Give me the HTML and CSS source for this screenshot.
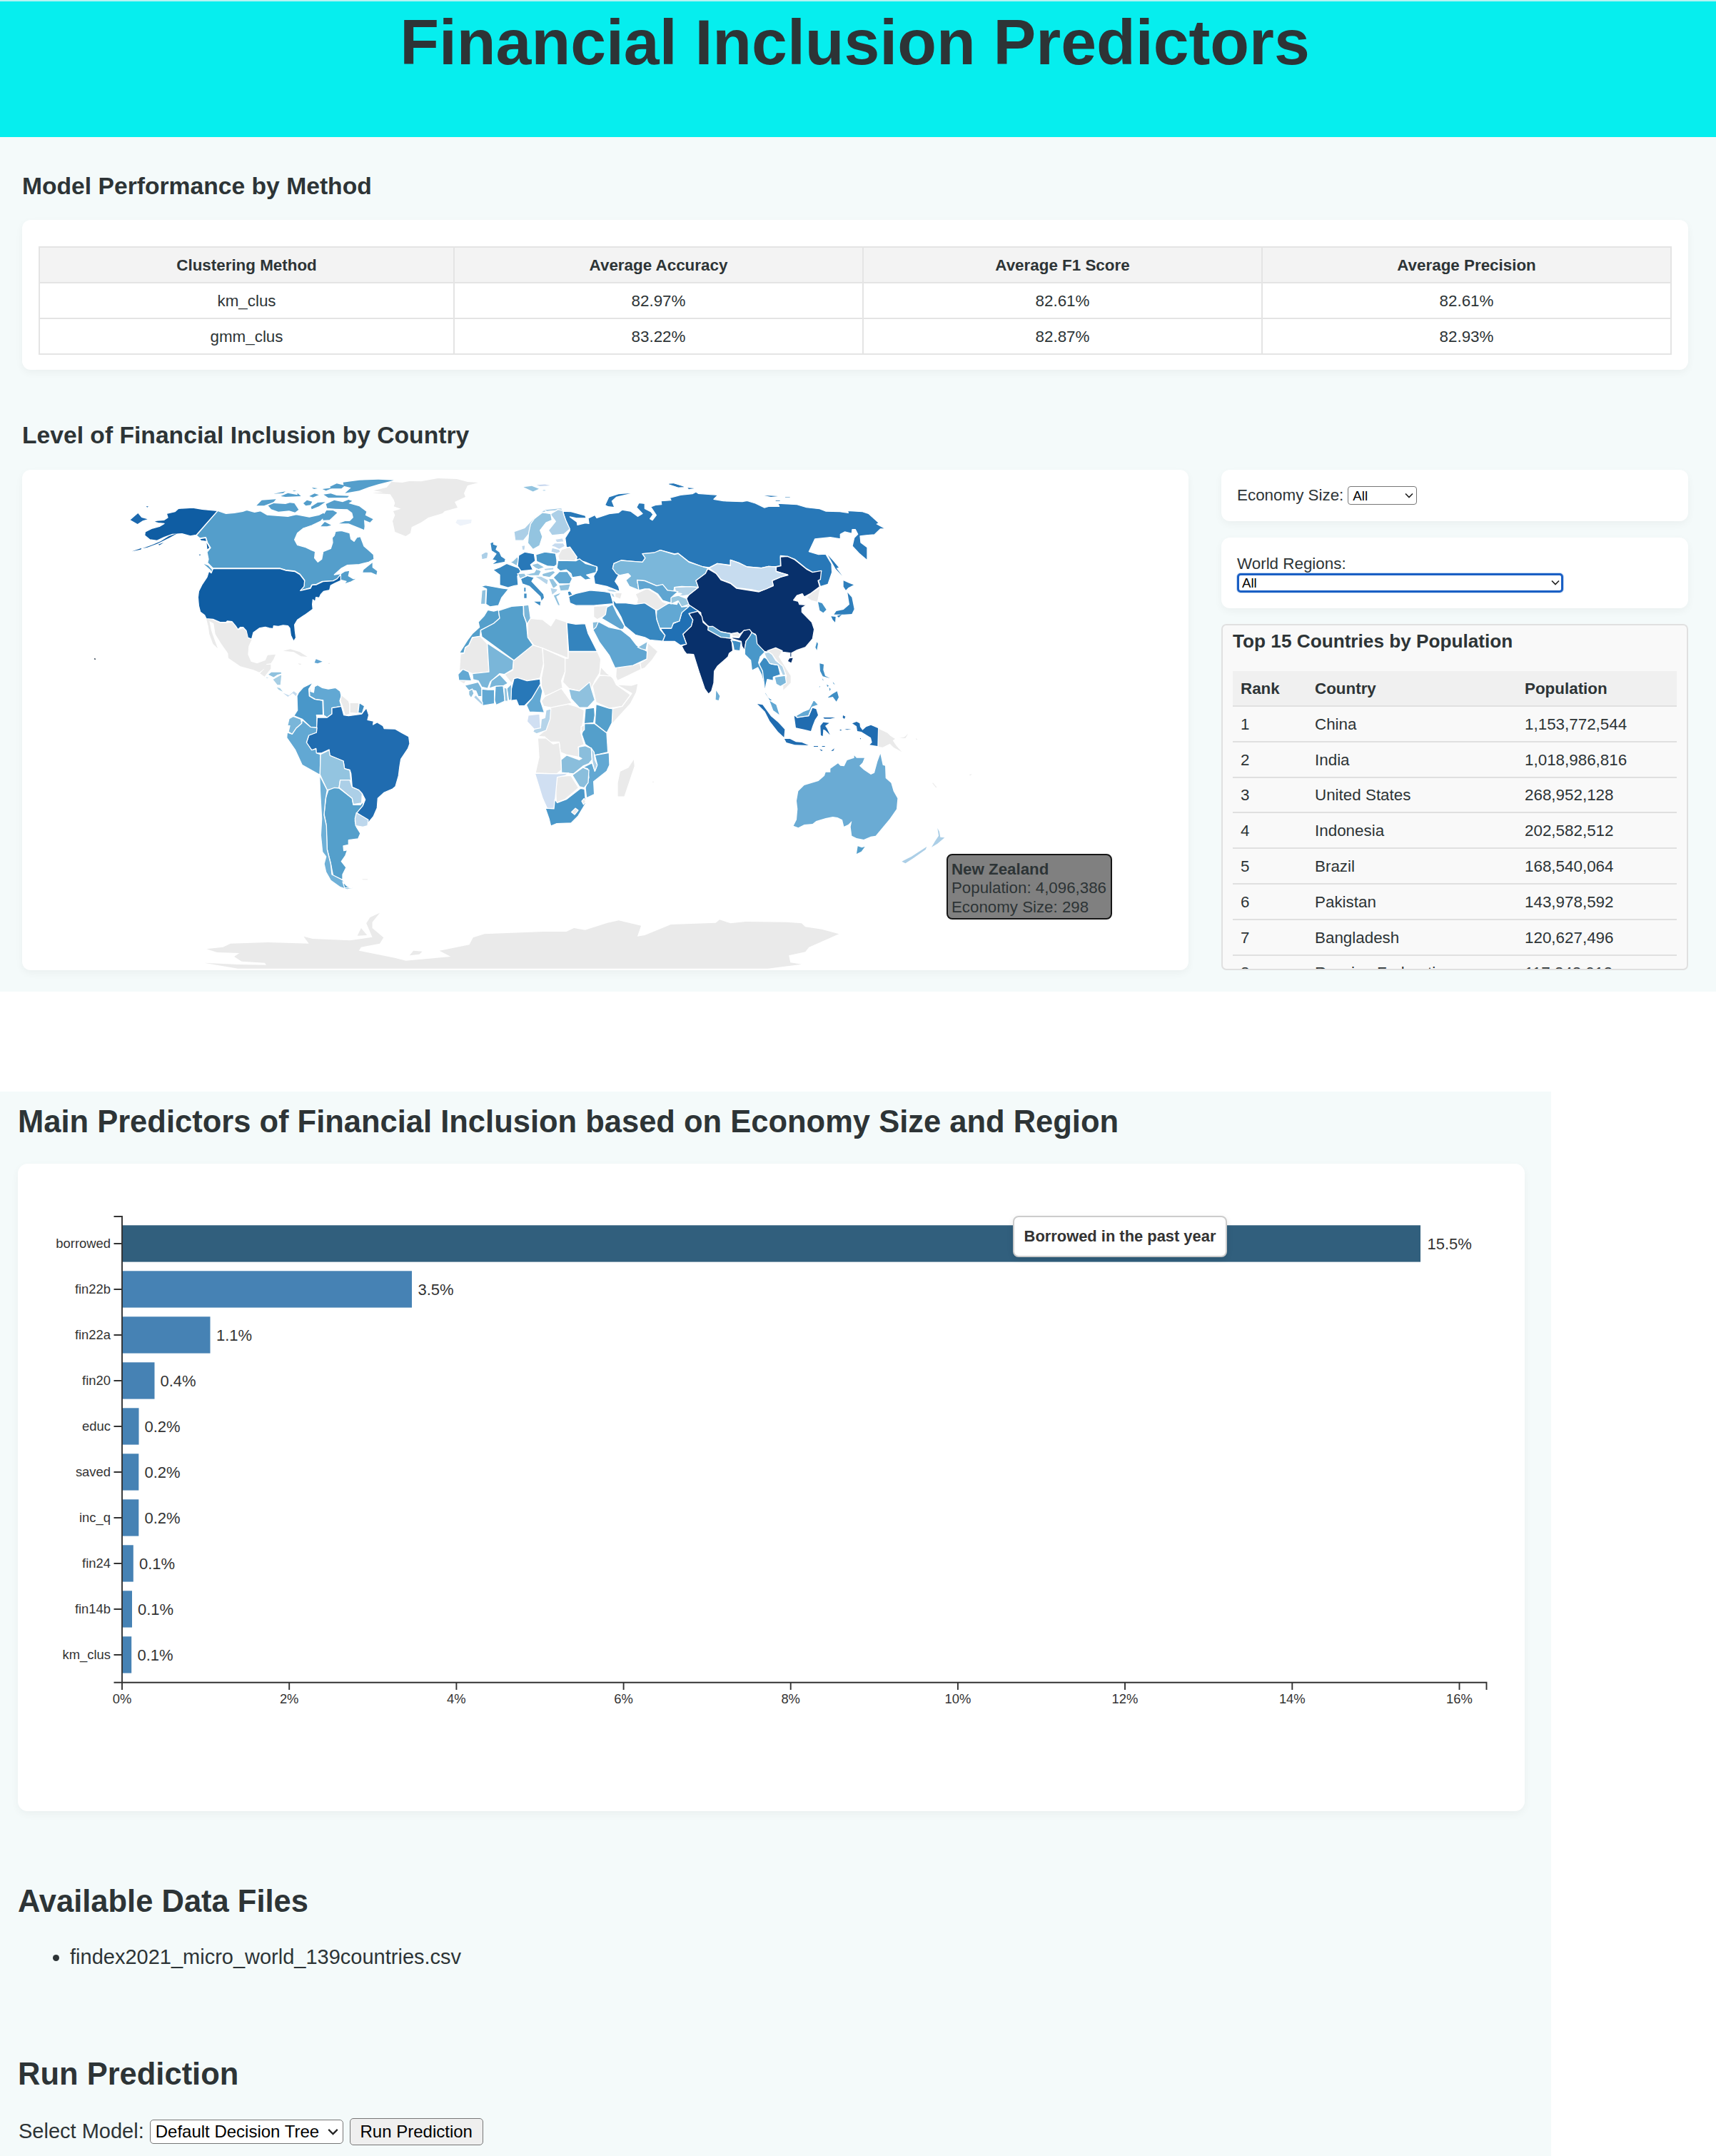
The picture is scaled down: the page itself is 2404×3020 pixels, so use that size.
FILE: index.html
```html
<!DOCTYPE html>
<html lang="en">
<head>
<meta charset="utf-8">
<title>Financial Inclusion Predictors</title>
<link rel="stylesheet" href="styles.css">
</head>
<body>
<header class="banner"><h1>Financial Inclusion Predictors</h1></header>

<main class="overview">
  <h2 class="section-title">Model Performance by Method</h2>
  <div class="card performance">
    <table class="perf-table">
      <colgroup><col class="c1"><col class="c2"><col class="c3"><col class="c4"></colgroup>
      <thead><tr><th>Clustering Method</th><th>Average Accuracy</th><th>Average F1 Score</th><th>Average Precision</th></tr></thead>
      <tbody>
        <tr><td>km_clus</td><td>82.97%</td><td>82.61%</td><td>82.61%</td></tr>
        <tr><td>gmm_clus</td><td>83.22%</td><td>82.87%</td><td>82.93%</td></tr>
      </tbody>
    </table>
  </div>

  <h2 class="section-title level">Level of Financial Inclusion by Country</h2>
  <div class="map-row">
    <div class="card map-card">
      <svg class="map" viewBox="31 658 1634 701" width="1634" height="701">
        <!-- North America -->
        <g transform="translate(170 650) scale(.33333)">
          <g fill="#549ecb">
            <path d="M405,196L440,208 475,205 510,199 527,193 560,202 585,197 612,213 650,216 700,220 735,212 790,222 832,213 850,204 862,216 838,240 800,258 765,270 740,290 728,318 740,340 775,350 800,362 815,368 812,395 826,412 842,400 848,368 880,355 888,330 886,310 895,300 900,283 925,280 960,290 965,315 978,325 990,308 1005,305 1020,345 1040,362 1060,380 1062,400 1040,412 1000,422 950,425 925,438 895,465 922,461 940,450 960,447 955,470 975,482 997,478 965,495 935,505 945,493 925,488 890,491 845,493 820,505 800,508 795,520 752,532 768,512 770,488 750,462 730,450 690,445 668,438 385,438 362,415 366,400 360,370 375,352 362,330 355,308 330,312 315,300Z"/>
            <g class="bare">
              <path d="M347,420L365,427 380,443 385,462 375,445Z"/>
              <path d="M617,175L640,165 690,168 708,163 727,165 745,192 730,203 705,196 660,200 630,190Z"/>
              <path d="M568,175L590,152 650,148 640,160 600,175Z"/>
              <path d="M940,122L965,100 935,92 932,77 1000,68 1080,65 1145,68 1080,85 1040,97 1000,112Z"/>
              <path d="M877,95L905,82 940,90 925,103 880,103Z"/>
              <path d="M850,128L880,124 905,132 957,134 950,141 870,142Z"/>
              <path d="M860,168L895,152 930,160 955,150 970,155 955,165 1000,178 1030,200 1025,215 1058,232 1045,245 1020,235 1022,262 1020,276 985,262 955,250 915,250 940,240 960,240 975,225 970,205 950,190 900,188 865,185Z"/>
              <path d="M670,135L700,122 740,130 740,122 755,135 690,138Z M640,125L690,115 680,122Z M765,165L780,152 802,158 795,172 775,175Z M797,180L825,162 857,160 830,178 800,190Z M790,135L812,124 830,130 805,140Z M800,99L825,102 810,105Z M845,105L890,100 860,112Z M838,262L855,243 882,257 865,262Z M845,222L862,195 890,195 907,205 875,235 848,236Z M720,112h16l-10,3z"/>
              <path d="M1018,445L1055,415 1055,435 1075,450 1072,465 1050,455 1015,455Z"/>
            </g>
          </g>
          <g fill="#0f5da3">
            <path d="M385,440H668L690,447 730,452 750,464 770,490 768,514 752,532 795,522 802,508 820,507 847,494 890,491 907,482 922,463 922,490 900,500 880,510 875,530 850,535 838,548 832,562 818,560 815,578 805,570 803,590 805,610 770,635 740,655 728,675 730,700 734,730 724,745 712,720 708,690 700,680 680,678 660,682 640,680 638,692 622,690 605,685 580,690 555,708 548,735 532,730 525,700 512,686 500,686 490,695 480,680 465,662 445,660 440,665 415,665 385,652 357,650 350,635 332,622 325,595 322,560 325,535 340,505 360,475 368,450 378,458Z"/>
            <path d="M405,196L380,194 340,190 300,183 240,187 225,200 190,208 195,225 180,235 150,237 135,243 155,248 180,250 160,262 130,270 100,285 98,300 120,318 150,322 180,308 215,295 255,293 290,303 315,298Z"/>
            <path d="M315,301L330,314 355,310 360,330 372,352 360,362 356,325 335,322Z"/>
            <g class="bare">
              <path d="M45,367L85,353 82,359Z M88,355L130,340 165,325 200,303 237,290 205,308 150,335 110,350Z M155,338L178,330 160,341Z M326,380l8,0 -4,5z"/>
              <path fill="#3b4a58" d="M-114,816l5,1 1,5 -5,0z"/>
            </g>
          </g>
          <path class="bare-path" fill="#1b68ae" d="M38,235L70,207 85,225 110,232 90,238 68,252Z M104,178l10,0 -5,4z"/>
          <g fill="#eaeaea" class="bare">
            <path d="M1055,122L1130,127 1145,150 1150,165 1145,178 1175,188 1143,198 1150,215 1140,240 1150,285 1195,303 1215,290 1220,265 1260,245 1290,225 1350,207 1359,198 1413,183 1401,159 1446,138 1440,123 1455,90 1500,78 1455,75 1410,63 1330,60 1260,73 1210,72 1180,78 1135,75 1115,98 1060,112 1100,118Z"/>
            <path d="M357,650L385,655 415,668 440,668 465,665 480,683 490,698 512,689 525,703 532,733 548,737 535,765 532,800 545,830 570,838 605,825 615,803 648,800 640,820 628,838 610,840 600,860 580,875 555,865 500,850 450,815 448,795 420,755 395,715 388,670 370,660 378,700 385,720 405,775 385,755 370,715 365,680Z"/>
            <path d="M583,880L600,862 602,844 628,842 628,860 612,880 602,893Z"/>
            <path d="M680,785L710,778 750,790 782,810 755,808 725,790Z M742,838L758,840 750,844Z M870,836h6v3h-6z"/>
          </g>
          <path fill="#8fc1de" d="M615,885L630,873 672,873 675,882 655,888 640,898Z M605,893L625,898 610,901Z"/>
          <path fill="#a6cee4" d="M635,905L675,882 670,930 655,930Z M648,935L668,940 685,962 660,950Z"/>
          <path class="bare-path" fill="#c3daee" d="M680,962L705,972 725,955 738,965 734,975 720,963 700,978Z"/>
          <path class="bare-path" fill="#62a5d2" d="M812,835L818,820 845,830 825,838Z"/>
        </g>
        <!-- South America -->
        <g transform="translate(380 920) scale(.33333)">
          <path fill="#4997c9" d="M176,108L158,135 160,165 182,178 216,183 218,245 190,245 192,255 192,298 165,295 130,262 95,248 110,225 108,165 115,150 135,128Z"/>
          <path fill="#62a8d3" d="M176,108L166,125 165,145 178,150 182,125 195,118 215,130 240,135 270,130 290,145 295,165 288,185 295,208 255,215 255,240 235,255 220,245 218,183 185,178 162,165 160,140Z"/>
          <path fill="#eaeaea" d="M295,160L325,185 330,200 330,240 310,248 300,210 290,185Z"/>
          <path fill="#eaeaea" d="M330,193H368L365,238 330,235Z"/>
          <path class="bare-path" fill="#eaeaea" d="M383,934h22v3h-22z"/>
          <path fill="#206cb0" d="M295,208L305,245 325,248 380,240 400,215 410,245 405,265 430,270 428,285 445,275 470,290 475,302 520,303 550,320 578,335 582,365 575,385 545,430 540,460 535,500 522,545 510,555 475,570 448,595 445,635 430,670 408,697 358,655 385,625 395,600 382,575 368,560 340,548 335,490 330,475 308,470 303,438 245,415 243,390 210,405 188,405 188,385 170,395 148,360 158,330 190,318 193,255 235,255 255,240 255,215Z"/>
          <path fill="#3f8ec4" d="M370,193L392,207 382,238 365,235Z"/>
          <path fill="#7ab6d9" d="M92,250L125,262 128,280 105,300 88,325 72,315 78,290 68,290 75,260Z"/>
          <path fill="#62a8d3" d="M130,265L165,295 192,298 190,318 158,330 148,360 170,392 188,387 190,405 207,410 205,497 130,455 100,390 65,340 67,318 88,325 105,300 128,280Z"/>
          <path fill="#93c4e0" d="M207,410L243,392 247,415 303,438 308,470 330,477 335,520 290,518 285,550 235,560 205,495Z"/>
          <path fill="#549fcb" d="M240,560L265,550 285,552 340,595 345,622 375,622 388,605 385,625 360,655 352,690 358,715 375,742 365,765 325,770 325,790 303,795 305,815 320,812 312,835 295,860 315,885 300,915 300,938 260,920 250,870 235,810 230,700 222,660 230,590Z"/>
          <path fill="#accfe7" d="M290,518L330,518 340,548 368,560 382,575 380,615 345,620 340,595 285,550Z"/>
          <path fill="#bdd7ec" d="M358,655L408,685 405,710 385,715 355,710 352,680Z"/>
          <path fill="#6fb0d7" d="M203,497L215,520 235,560 228,600 222,665 232,710 235,810 250,870 255,915 300,938 320,965 348,973 320,978 290,968 250,940 230,905 222,870 230,840 215,820 208,750 212,680 205,560Z"/>
          <path fill="#549fcb" d="M300,945L320,965 345,973 308,970Z"/>
        </g>
        <!-- Africa -->
        <g transform="translate(620 650) scale(.33333 .35714)">
          <g fill="#eaeaea">
            <path d="M358,605L420,610 455,635 475,605 522,620 528,762 420,722 385,712 358,680Z"/>
            <path d="M125,680L158,675 188,705 195,815 125,822 85,805 70,815 75,745 90,742 95,720 110,712Z"/>
            <path d="M298,770L380,710 420,722 425,780 410,840 355,850 315,838 300,842 290,860 260,825 295,808Z"/>
            <path d="M420,722L515,762 515,815 500,850 505,880 430,910 415,870 415,840 425,790Z"/>
            <path d="M528,735H650L665,765 660,820 640,850 625,885 575,890 530,880 505,855 515,815 515,762 528,762Z"/>
            <path d="M660,830L710,828 730,865 790,905 755,950 700,958 645,935 630,870Z"/>
            <path d="M665,795L690,820 730,850 710,832 660,828Z"/>
            <path d="M730,865L795,868 822,860 815,895 790,940 712,1020 712,960 755,950 795,900Z"/>
            <path d="M455,950L520,940 560,950 595,965 590,1015 580,1050 595,1100 570,1110 575,1150 520,1140 495,1130 490,1090 440,1090 430,1070 400,1068 435,1040Z"/>
            <path d="M430,912L500,880 545,938 455,955 425,950 415,930Z"/>
            <path d="M400,1075L435,1075 465,1098 490,1092 498,1150 500,1200 480,1215 390,1212 405,1150Z"/>
            <path d="M482,1225L540,1222 572,1270 515,1315 478,1328 475,1270Z"/>
            <path d="M805,1155L808,1185 765,1305 735,1305 735,1250 745,1205 780,1190Z"/>
            <path class="bare-path" d="M70,850h28l-8,10z M883,1245h4v4h-4z"/>
          </g>
          <g fill="#549fcb">
            <path d="M190,572L215,577 235,572 240,605 215,625 160,652 158,675 125,680 110,710 95,720 90,740 70,742 105,690 125,665 155,640 150,620 175,595Z"/>
            <path d="M235,575L290,558 340,555 340,590 352,620 358,680 380,710 300,770 165,678 160,652 215,625 240,605Z"/>
            <path d="M645,942L700,958 715,960 712,1015 690,1055 640,1018Z"/>
            <path d="M600,960L638,955 640,985 635,1015 595,1018Z"/>
            <path d="M597,1018L638,1018 690,1055 695,1130 640,1142 625,1115 600,1100 585,1060Z"/>
          </g>
          <path fill="#3484be" d="M522,622L560,628 600,626 612,665 650,735H530Z"/>
          <path fill="#2878b8" d="M300,842L315,838 355,850 410,843 412,870 375,920 345,948 320,948 310,925 285,928 288,885Z"/>
          <g fill="#7ab6d9">
            <path d="M340,555L362,552 370,605 355,628 342,595Z"/>
            <path d="M188,703L298,770 295,805 260,825 240,822 200,855 190,880 165,875 150,850 128,845 125,822 195,815Z"/>
            <path d="M270,880L290,862 288,925 278,928Z"/>
            <path d="M195,880L205,850 240,825 275,860 255,870 222,872Z"/>
            <path d="M92,868L150,855 165,880 165,912 150,912 140,890 120,885 112,890Z"/>
          </g>
          <g fill="#62a8d3">
            <path d="M410,865L420,890 412,930 428,975 365,972 352,945 375,920Z"/>
            <path d="M222,872L255,870 262,930 225,945 218,925Z"/>
            <path d="M165,882L190,885 218,885 218,940 165,948Z"/>
            <path d="M65,825L85,805 110,815 122,850 68,848Z"/>
            <path d="M640,1142L700,1132 702,1180 690,1205 635,1245 638,1295 605,1310 600,1270 615,1230 610,1195 590,1190 628,1172 640,1205 650,1180Z"/>
          </g>
          <path fill="#8fc1de" d="M530,882L575,890 610,862 618,855 625,880 640,925 610,955 575,955 540,920Z"/>
          <path fill="#8abedc" d="M498,1160L522,1142 575,1160 585,1155 572,1148 572,1110 600,1105 625,1115 628,1160 615,1175 590,1185 550,1215 500,1210Z"/>
          <path fill="#8abedc" d="M545,1220L590,1190 615,1200 612,1250 595,1270 575,1265Z"/>
          <path fill="#8fc1de" d="M258,875L270,880 275,930 262,930Z M110,890L125,882 132,900 120,918 110,905Z"/>
          <path fill="#accfe7" d="M130,915L140,905 168,935 168,948Z M625,1115L637,1130 640,1160 650,1180 640,1205 630,1170Z"/>
          <path fill="#b5d4e9" d="M435,965L455,960 452,1000 435,1045 395,1058 380,1050 385,1040 412,1030 415,1000 430,995Z"/>
          <path fill="#d0dff2" d="M360,985L408,980 412,1035 385,1040 355,1010Z"/>
          <path fill="#d0dff2" d="M388,1213L480,1215 530,1212 515,1222 482,1228 470,1350 440,1352 420,1310Z"/>
          <path fill="#4997c9" d="M432,1350L468,1352 472,1315 482,1328 520,1315 580,1272 597,1275 602,1330 570,1380 540,1408 480,1410 455,1420 447,1390Z"/>
          <path fill="#eaeaea" d="M542,1365L558,1350 570,1358 555,1375Z"/>
          <path fill="#eaeaea" d="M585,1322L595,1312 602,1325 592,1335Z M582,1030l14,-8 0,20 -12,12z"/>
        </g>
        <!-- Asia -->
        <g transform="translate(900 650) scale(.33333)">
          <path fill="#2878b8" d="M-335,198L-300,200 -240,216 -236,228 -280,227 -305,222 -275,244 -273,256 -240,248 -225,250 -228,228 -200,214 -192,226 -140,209 -100,204 -85,192 -50,198 -20,220 0,208 -25,182 -15,163 10,166 10,187 35,200 45,212 32,230 42,236 58,215 45,195 35,180 55,172 80,170 78,155 120,152 115,142 160,130 210,125 225,117 235,124 318,130 300,148 340,155 420,158 440,154 475,165 512,183 530,178 575,178 568,165 650,170 690,182 745,188 770,198 830,200 865,205 862,196 925,200 950,208 995,248 985,252 1022,272 1000,273 975,297 940,300 915,303 918,330 945,350 945,405 910,375 882,345 890,310 905,295 895,275 882,275 880,292 850,285 832,295 832,315 790,308 725,315 700,368 740,380 770,378 795,420 797,455 780,505 748,515 740,490 752,450 715,455 690,440 640,400 610,388 580,385 580,428 555,432 530,430 500,437 440,432 405,415 370,403 370,425 315,418 280,435 255,432 195,410 150,375 135,378 75,362 50,375 0,377 12,395 0,412 -40,409 -90,405 -120,418 -125,439 -110,455 -100,466 -115,493 -100,514 -95,536 -150,514 -200,504 -205,471 -190,445 -190,434 -240,412 -275,402 -290,370 -320,348 -325,311 -305,279 -320,246Z"/>
          <path class="bare-path" fill="#2878b8" d="M110,85L130,82 175,95 150,97Z M190,100L218,102 195,106Z M512,132L570,135 540,138Z M600,139h20v1h-20z M560,153h18v2h-18z M780,383L800,405 825,435 815,437 840,470 812,440Z"/>
          <path fill="#7bb7da" d="M75,362L50,372 0,377 12,395 0,412 -40,409 -90,405 -120,418 -125,439 -110,460 -95,468 -60,460 -50,471 -70,488 -55,514 -15,530 -22,488 10,490 60,512 85,508 105,530 130,542 135,518 165,514 235,518 225,490 265,460 275,437 255,432 195,412 150,376 135,380Z"/>
          <path fill="#08306b" d="M275,440L310,460 330,487 370,502 395,522 490,537 550,512 545,490 580,475 612,467 562,450 562,432 582,428 580,390 610,388 640,402 690,442 715,455 752,448 748,485 738,490 745,515 705,545 680,558 672,545 650,552 635,572 655,577 660,590 690,592 670,605 670,622 712,665 722,695 715,735 685,770 650,782 625,795 590,790 560,775 530,790 512,787 480,760 475,715 450,705 430,698 405,718 370,712 330,705 275,680 250,655 245,625 195,592 182,570 195,550 235,518 225,490 265,460Z"/>
          <path class="bare-path" fill="#08306b" d="M612,828L618,817 632,815 625,835Z M622,793h3v16h-3z"/>
          <path fill="#c7dcef" d="M280,437L315,418 370,427 370,403 405,415 440,432 500,437 530,430 562,432 562,452 610,465 580,475 545,490 550,510 520,525 490,535 460,528 395,520 370,500 330,485 310,460Z"/>
          <path fill="#08306b" d="M195,628L230,615 250,640 255,665 275,682 285,700 370,732 375,735 380,785 365,795 360,810 315,850 302,870 300,920 290,955 278,967 262,945 240,880 215,800 185,798 175,785 165,765 185,755 170,715 205,680 212,655Z"/>
          <path fill="#08306b" d="M372,728L405,730 425,700 450,695 460,708 455,725 435,745 430,785 418,765 415,745 380,735Z"/>
          <path fill="#6cadd5" d="M277,683L295,682 330,705 370,712 370,732 330,728 275,697Z"/>
          <path fill="#eaeaea" d="M375,712L400,708 408,715 408,727 378,724Z"/>
          <path fill="#3f8ec4" d="M372,740L392,742 415,748 410,785 385,782 380,755Z"/>
          <path fill="#2070b4" d="M165,600L195,592 245,625 235,618 195,628 212,655 205,682 170,715 185,757 160,762 135,745 85,745 95,720 75,690 120,690 130,670 155,660 165,625Z"/>
          <path fill="#62a8d3" d="M60,612L105,588 115,585 145,590 150,575 165,600 197,597 165,625 155,660 130,668 122,690 72,690 58,645Z"/>
          <path fill="#b5d4e9" d="M135,518L200,515 235,518 195,550 170,555 150,552 165,545 140,540Z"/>
          <path fill="#9ac8e0" d="M118,560L150,552 185,565 195,590 165,600 150,575 120,588Z"/>
          <path fill="#eaeaea" d="M525,785L560,772 588,785 575,810 600,850 625,890 625,920 590,955 590,930 605,890 590,855 560,820 545,800Z"/>
          <path fill="#4997c9" d="M460,708L478,720 482,755 515,790 495,810 488,835 505,870 518,925 512,930 500,885 485,855 460,868 455,825 430,800 430,775 435,745 450,725Z"/>
          <path fill="#3b8bc2" d="M490,840L510,812 530,820 540,840 570,845 580,885 550,895 550,910 525,905 520,925 515,955 530,980 550,995 535,995 515,965 512,930 505,870Z"/>
          <path fill="#b2d3e8" d="M512,795L530,790 545,800 560,825 590,850 602,885 590,890 570,845 535,838 520,815Z"/>
          <path fill="#7bb7da" d="M555,895L600,888 605,920 580,935 562,925Z"/>
          <g class="bare">
            <path fill="#6cadd5" d="M310,952L325,975 320,993 308,990Z"/>
            <path fill="#eaeaea" d="M692,560L715,540 745,522 740,550 735,578 710,572Z"/>
            <path fill="#4190c5" d="M738,580L755,585 773,612 760,625 745,615Z M733,748L738,755 733,782 727,770Z"/>
            <path fill="#2f7fbc" d="M845,490L868,500 888,508 865,520 855,530 845,515Z M862,540L880,560 890,610 880,630 848,632 805,632 815,618 845,612 870,590Z M793,640L812,642 810,665 800,655Z M818,638L838,632 825,645Z"/>
          </g>
        </g>
        <!-- Oceania and the archipelagos -->
        <g transform="translate(1000 900) scale(.33333)" class="bare">
          <path fill="#3f8ec4" d="M445,88L462,92 460,115 468,140 488,150 458,142 447,120Z M455,150l6,8 -2,2z M475,176l8,6 -6,4z M500,165l9,12 -6,-4z M485,190l6,6 -4,8z M480,230L500,215 518,205 525,230 515,248 500,228 482,232Z M442,187l4,-3 1,3z"/>
          <path fill="#62a8d3" d="M235,245L262,262 275,303 250,285Z"/>
          <path fill="#206cb0" d="M183,258L205,262 240,310 270,335 298,365 295,398 270,375 235,330 215,290Z M297,405L320,405 345,418 370,420 398,432 340,430 305,420Z M338,308L350,315 400,310 415,275 430,280 438,305 425,325 415,350 408,372 380,365 345,358Z"/>
          <path class="edged" fill="#62a8d3" d="M345,308L375,290 400,280 420,240 440,262 412,272 398,308 350,315Z"/>
          <path fill="#206cb0" d="M448,350L460,335 485,338 468,350 476,362 488,388 468,368 460,365 458,393 450,390Z M460,315L510,315 490,320 465,320Z M543,306l10,5 -4,10 -7,-5z M530,366h6v4h-6z M550,363L577,365 560,367Z M420,435h18v3h-18z M455,435h12v3h-12z M445,448l13,5 -6,3z M493,455L507,445 502,455Z M614,402l4,0 -1,5z M582,340L600,333 613,340 615,355 625,368 640,355 660,347 690,360 688,435 655,430 665,420 660,400 620,375 603,372 600,352Z"/>
          <path fill="#eaeaea" d="M692,362L730,380 742,392 762,405 752,412 768,435 790,460 755,440 740,425 710,440 692,438Z M780,402L800,398 817,383 805,402Z M918,590L922,590 938,610 932,608Z M1072,556l12,-3 -4,6z M850,402l6,6 -6,0z"/>
          <path fill="#6aabd4" d="M590,475L600,485 633,485 625,505 612,518 630,535 660,555 675,548 688,500 700,468 710,515 720,518 722,570 745,590 755,625 772,655 768,700 740,740 680,812 660,815 630,828 600,822 580,812 575,775 580,750 565,765 547,773 540,745 520,735 500,732 470,738 430,750 415,762 380,765 355,778 335,770 348,745 352,700 348,665 355,625 380,600 440,582 465,560 470,545 490,545 490,530 522,508 532,518 548,520 560,495 590,485Z"/>
          <path fill="#549fcb" d="M605,856L622,862 635,858 620,878 600,888Z"/>
          <path fill="#accfe7" d="M790,920L830,900 895,858 890,870 840,905 805,928Z M915,860L930,835 945,812 940,780 948,795 952,818 970,820 940,845Z"/>
        </g>
        <!-- Middle East and Europe -->
        <g transform="translate(620 650) scale(.33333 .35714)">
          <path fill="#eaeaea" d="M810,510L860,488 900,510 925,540 945,548 905,572 890,570 850,548 815,548 820,530Z"/>
          <path fill="#5fa5d1" d="M825,495L818,455 850,458 900,478 925,472 945,495 990,500 960,525 960,545 925,535 905,510 870,490 850,490Z"/>
          <path fill="#3787c0" d="M715,530L730,545 770,545 810,550 850,545 895,572 900,610 915,650 935,672 925,695 870,690 850,680 810,670 765,635 750,600 735,575 720,555Z"/>
          <path fill="#eaeaea" d="M635,558L700,555 690,590 650,610 635,600Z M730,800L800,788 830,780 835,805 735,850 728,835Z"/>
          <path fill="#eaeaea" d="M830,780L858,765 862,700 905,735 880,770 850,800 835,805Z"/>
          <path fill="#5fa5d1" d="M632,650L655,618 700,640 750,650 790,680 815,710 860,735 858,765 800,790 725,800 700,750 660,700Z"/>
          <path fill="#5fa5d1" d="M690,562L715,550 735,590 765,635 760,648 745,648 668,605 685,590Z"/>
          <path fill="#8abedc" d="M820,718L862,695 855,730 835,725Z M632,650L630,620 655,618 645,640Z"/>
          <path fill="#3787c0" d="M530,520L560,508 620,495 680,500 705,505 718,548 635,555 560,555 535,545Z M525,500l12,-2 10,15 -18,5z"/>
          <path fill="#b5d4e9" d="M680,488L720,492 740,505 700,500Z M705,503L720,510 725,525 712,520Z"/>
          <path fill="#eaeaea" d="M725,505L755,505 748,530 725,522Z"/>
          <path class="bare-path" fill="#2878b8" d="M685,160L700,130 740,118 790,115 730,128 710,145 720,168 695,165Z M950,77L975,78 1015,90 990,91Z"/>
          <path fill="#accfe7" d="M300,265L345,250 390,205 430,178 500,172 505,182 450,185 400,195 375,235 362,275 340,300 305,300Z"/>
          <path fill="#accfe7" d="M430,182L455,195 485,178 505,182 510,200 520,225 535,255 510,275 460,280 445,260 475,225 455,200Z"/>
          <path fill="#93c4e0" d="M385,215L420,190 455,195 460,220 435,230 410,260 420,285 408,320 380,335 358,310 362,270 370,235Z"/>
          <path fill="#c6dbef" d="M472,295L505,290 510,305 480,308Z M455,322L470,310 508,310 515,322 490,335 470,325Z"/>
          <path fill="#bdd7ec" d="M460,328L490,335 498,345 478,352 455,345Z M332,320L348,318 345,338 335,338Z M520,418L550,440 540,450 530,430Z"/>
          <path fill="#eaeaea" d="M485,360L500,335 535,325 565,365 555,380 490,378Z"/>
          <path fill="#4997c9" d="M480,408L485,378 560,380 575,372 600,390 648,402 645,425 605,435 625,450 600,455 580,440 545,445 540,430 520,415 495,420Z"/>
          <path fill="#62a8d3" d="M465,445L490,422 525,422 545,450 535,470 490,470Z"/>
          <path fill="#8fc1de" d="M488,475L538,470 530,495 495,498Z M465,515L500,502 490,515 480,520 495,555 485,555Z M165,495L183,492 180,550 160,550Z M418,430L465,418 475,425 450,445 420,440Z M295,380L315,362 320,375 312,400 285,385Z"/>
          <path fill="#4997c9" d="M392,355L430,345 475,350 480,375 480,395 470,402 440,400 395,382Z"/>
          <path fill="#2878b8" d="M320,358L345,345 385,352 390,380 370,395 380,415 330,420 315,400Z"/>
          <path fill="#3787c0" d="M200,310L218,302 214,314 232,320 225,335 240,345 248,362 265,372 262,385 205,395 225,380 208,375 225,352 205,340Z M212,415L240,405 270,390 320,408 328,420 315,440 318,475 300,478 275,485 240,475 240,435Z"/>
          <path fill="#accfe7" d="M165,375L162,355 185,342 192,350 188,370Z"/>
          <path fill="#4997c9" d="M162,480L180,475 250,487 278,490 248,525 235,555 200,560 182,550 185,490Z"/>
          <path fill="#3f8ec4" d="M328,450L355,438 385,445 375,460 425,510 428,525 415,540 410,520 365,480 335,470Z"/>
          <path class="bare-path" fill="#3f8ec4" d="M385,540L412,540 410,555Z M343,508h10v18h-10z M343,485h6v15h-6z"/>
          <path fill="#93c4e0" d="M315,430L345,428 352,440 325,450Z M350,432L385,425 395,410 415,420 405,438 365,437Z M372,395L400,388 430,405 400,415Z M445,450L465,450 485,475 465,490Z"/>
          <path fill="#b5d4e9" d="M385,440L415,440 445,455 440,475 410,455Z M425,410L470,405 465,415 430,418Z M452,485L485,490 480,500 460,515Z"/>
          <g class="bare">
            <path fill="#eef3fa" d="M55,230L62,218 122,218 120,232 75,242Z"/>
            <path fill="#93c4e0" d="M340,90L375,86 405,97 380,108Z M422,102h10v2h-10z"/>
            <path fill="#c6d6ee" d="M395,82L430,80 452,84 410,87Z"/>
          </g>
        </g>
        <!-- Antarctica -->
        <path class="bare-path" fill="#eaeaea" transform="translate(30 1160) scale(1.0459 .33333)" d="M245,566L290,573 328,575 326,566 295,560 285,540 292,525 262,522 248,508 270,500 280,485 330,480 385,485 378,455 390,465 440,472 470,458 462,400 467,375 480,356 470,395 470,420 485,460 480,485 455,500 452,515 500,545 515,557 575,540 560,515 600,490 605,460 620,445 700,435 730,435 740,420 755,428 785,398 800,388 830,410 825,455 835,450 870,405 930,398 935,385 950,400 970,393 1025,395 1045,400 1050,415 1072,425 1095,445 1055,500 1050,520 1028,535 1030,565 1045,572 1000,590 290,590Z M520,535L525,515 537,518 533,530Z M450,452L455,420 463,450Z"/>
      </svg>
      <div class="map-tip"><b>New Zealand</b><br>Population: 4,096,386<br>Economy Size: 298</div>
    </div>

    <aside class="side">
      <div class="card filter economy">
        <label for="economy">Economy Size:</label>
        <span class="select small"><select id="economy"><option>All</option></select><svg class="chev" viewBox="0 0 12 8"><path d="M1 1.5l5 5 5-5"/></svg></span>
      </div>
      <div class="card filter regions">
        <label for="region">World Regions:</label>
        <span class="select focused"><select id="region"><option>All</option></select><svg class="chev" viewBox="0 0 12 8"><path d="M1 1.5l5 5 5-5"/></svg></span>
      </div>
      <div class="ranking">
        <h3>Top 15 Countries by Population</h3>
        <table class="rank-table">
          <colgroup><col class="r1"><col class="r2"><col></colgroup>
          <thead><tr><th>Rank</th><th>Country</th><th>Population</th></tr></thead>
          <tbody>
            <tr><td>1</td><td>China</td><td>1,153,772,544</td></tr>
            <tr><td>2</td><td>India</td><td>1,018,986,816</td></tr>
            <tr><td>3</td><td>United States</td><td>268,952,128</td></tr>
            <tr><td>4</td><td>Indonesia</td><td>202,582,512</td></tr>
            <tr><td>5</td><td>Brazil</td><td>168,540,064</td></tr>
            <tr><td>6</td><td>Pakistan</td><td>143,978,592</td></tr>
            <tr><td>7</td><td>Bangladesh</td><td>120,627,496</td></tr>
            <tr><td>8</td><td>Russian Federation</td><td>117,848,912</td></tr>
          </tbody>
        </table>
      </div>
    </aside>
  </div>
</main>

<section class="predictors">
  <h2 class="big-title">Main Predictors of Financial Inclusion based on Economy Size and Region</h2>
  <div class="card chart-card">
    <svg class="chart" viewBox="26 1630 2110 907" width="2110" height="907">
      <g class="bars">
        <rect class="hover" x="171" y="1716.3" width="1819" height="51.3"/>
        <rect x="171" y="1780.3" width="406" height="51.3"/>
        <rect x="171" y="1844.3" width="123.5" height="51.3"/>
        <rect x="171" y="1908.3" width="45.5" height="51.3"/>
        <rect x="171" y="1972.3" width="23.5" height="51.3"/>
        <rect x="171" y="2036.3" width="23.3" height="51.3"/>
        <rect x="171" y="2100.3" width="23.3" height="51.3"/>
        <rect x="171" y="2164.3" width="15.8" height="51.3"/>
        <rect x="171" y="2228.3" width="14" height="51.3"/>
        <rect x="171" y="2292.3" width="13.2" height="51.3"/>
      </g>
      <path class="axis" d="M159.500,1704H171V2356.700H159.500 M159.500,1742H171 M159.500,1806H171 M159.500,1870H171 M159.500,1934H171 M159.500,1998H171 M159.500,2062H171 M159.500,2126H171 M159.500,2190H171 M159.500,2254H171 M159.500,2318H171"/>
      <path class="axis" d="M171,2367V2356.700H2082.500V2367 M405.200,2357V2367 M639.400,2357V2367 M873.600,2357V2367 M1107.700,2357V2367 M1341.900,2357V2367 M1576,2357V2367 M1810.300,2357V2367 M2044.500,2357V2367"/>
      <g class="names">
        <text x="155" y="1748">borrowed</text><text x="155" y="1812">fin22b</text><text x="155" y="1876">fin22a</text><text x="155" y="1940">fin20</text><text x="155" y="2004">educ</text><text x="155" y="2068">saved</text><text x="155" y="2132">inc_q</text><text x="155" y="2196">fin24</text><text x="155" y="2260">fin14b</text><text x="155" y="2324">km_clus</text>
      </g>
      <g class="ticks">
        <text x="171" y="2385.600">0%</text><text x="405.200" y="2385.600">2%</text><text x="639.400" y="2385.600">4%</text><text x="873.600" y="2385.600">6%</text><text x="1107.700" y="2385.600">8%</text><text x="1341.900" y="2385.600">10%</text><text x="1576" y="2385.600">12%</text><text x="1810.300" y="2385.600">14%</text><text x="2044.500" y="2385.600">16%</text>
      </g>
      <g class="values">
        <text x="1999.500" y="1750">15.5%</text><text x="585.500" y="1814">3.5%</text><text x="303" y="1878">1.1%</text><text x="224.500" y="1942">0.4%</text><text x="202.500" y="2006">0.2%</text><text x="202.500" y="2070">0.2%</text><text x="202.500" y="2134">0.2%</text><text x="195" y="2198">0.1%</text><text x="193" y="2262">0.1%</text><text x="192.500" y="2326">0.1%</text>
      </g>
    </svg>
    <div class="bar-tip">Borrowed in the past year</div>
  </div>

  <h2 class="big-title files-title">Available Data Files</h2>
  <ul class="files"><li>findex2021_micro_world_139countries.csv</li></ul>

  <h2 class="big-title run-title">Run Prediction</h2>
  <div class="run-row">
    <label for="model">Select Model:</label>
    <span class="select model"><select id="model"><option>Default Decision Tree</option></select><svg class="chev" viewBox="0 0 12 8"><path d="M1 1.5l5 5 5-5"/></svg></span>
    <button type="button" class="run">Run Prediction</button>
  </div>
</section>
</body>
</html>
```

FILE: styles.css
```css
* { box-sizing: border-box; }
body {
  margin: 0;
  background: #fff;
  color: #2d3436;
  font-family: "Liberation Sans", Arial, sans-serif;
  font-size: 22.4px;
}
h1, h2, h3 { margin: 0; font-weight: 700; }

.banner {
  height: 192px;
  padding: 12px 9px 0 0;
  border-top: 2px solid #b4f3f3;
  background: #06eeee;
  text-align: center;
}
.banner h1 { font-size: 89.6px; line-height: 90px; }

.card {
  background: #fff;
  border-radius: 12px;
  box-shadow: 0 4px 12px rgba(0, 0, 0, .045);
}

.overview {
  height: 1197px;
  padding: 49px 39px 0 31px;
  background: #f4fafa;
}
.section-title { font-size: 33.65px; line-height: 40px; }
.section-title.level { margin-top: 72px; }

.performance { height: 210px; margin-top: 27px; padding: 37px 23px 0; }
.perf-table { width: 100%; border-collapse: collapse; table-layout: fixed; text-align: center; }
.perf-table .c1 { width: 581px; }
.perf-table .c2 { width: 573px; }
.perf-table .c3 { width: 559px; }
.perf-table th, .perf-table td {
  height: 50px;
  padding: 2px 0 0;
  border: 2px solid #e4e4e4;
  line-height: 26px;
}
.perf-table th { background: #f3f3f3; }

.map-row { display: flex; gap: 46px; height: 701px; margin-top: 28px; }
.map-card { position: relative; flex: none; width: 1634px; }
.map { display: block; border-radius: 12px; }
.map path { stroke: #fff; stroke-width: 1.3; stroke-linejoin: round; vector-effect: non-scaling-stroke; }
.map .bare path, .map .bare-path { stroke: none; }
.map .bare .edged { stroke: #fff; }
.map-tip {
  position: absolute;
  left: 1295px;
  top: 538px;
  width: 232px;
  height: 92px;
  padding: 7px 5px 0;
  border: 2px solid #161616;
  border-radius: 8px;
  background: #808080;
  font-size: 22.3px;
  line-height: 26.3px;
  white-space: nowrap;
}

.side { flex: 1; display: flex; flex-direction: column; gap: 22.5px; }
.filter { flex: none; padding-left: 22px; }
.economy { display: flex; align-items: center; height: 72px; gap: 6px; }
.economy label { line-height: 26px; padding-bottom: 1px; }
.regions { display: flex; flex-direction: column; height: 99px; padding-top: 24px; }
.regions label { line-height: 26px; }

.select { display: inline-grid; align-items: center; flex: none; }
.select > * { grid-area: 1 / 1; }
.select select {
  appearance: none;
  width: 100%;
  height: 100%;
  margin: 0;
  border: 1.5px solid #767676;
  border-radius: 4px;
  background: #fff;
  color: #000;
  font-family: inherit;
  font-size: 18.7px;
}
.chev { justify-self: end; margin-right: 5px; width: 12px; height: 8px; fill: none; stroke: #222; stroke-width: 1.7; pointer-events: none; }
.select.small { width: 97px; height: 26px; }
.select.small select { padding: 0 0 0 6px; }
.select.focused { width: 457px; height: 26px; }
.select.focused select { padding: 0 0 0 4px; border: 3px solid #1a5fc4; border-radius: 5px; box-shadow: 0 0 0 1px #c9dcf3; }

.ranking {
  flex: 1;
  min-height: 0;
  overflow: hidden;
  padding: 0 14px;
  border: 2px solid #e0e0e0;
  border-radius: 7px;
  background: #f9f9f9;
}
.ranking h3 { margin-top: 7px; font-size: 26.2px; line-height: 30px; }
.rank-table { width: 100%; margin-top: 27px; border-spacing: 0; table-layout: fixed; text-align: left; }
.rank-table .r1 { width: 104px; }
.rank-table .r2 { width: 294px; }
.rank-table th, .rank-table td { height: 49.8px; padding: 2px 0 0 11px; border-bottom: 2px solid #e0e0e0; line-height: 26px; }
.rank-table th { height: 50px; background: #f0f0f0; }

.predictors {
  width: 2173px;
  height: 1491px;
  margin-top: 140px;
  padding: 16px 0 0 25px;
  background: #f4fafa;
}
.big-title { font-size: 43.5px; line-height: 52px; }
.chart-card { position: relative; width: 2111px; height: 907px; margin-top: 33px; border-radius: 14px; }
.chart { display: block; margin-left: 1px; }
.bars rect { fill: #4682b4; }
.bars .hover { fill: #315f7d; }
.axis { fill: none; stroke: #333; stroke-width: 1.9; }
.chart text { fill: #333; }
.names, .ticks { font-size: 18.4px; }
.names { text-anchor: end; }
.ticks { text-anchor: middle; }
.values { font-size: 22px; }
.bar-tip {
  position: absolute;
  left: 1394px;
  top: 73px;
  width: 300px;
  height: 58px;
  border: 2px solid #ccc;
  border-radius: 8px;
  background: #fff;
  box-shadow: 0 3px 9px rgba(0, 0, 0, .1);
  color: #333;
  font-size: 21.9px;
  font-weight: 700;
  line-height: 54px;
  text-align: center;
}

.files-title { margin-top: 99.6px; }
.files { margin: 35.4px 0 0; padding-left: 73px; font-size: 29px; line-height: 34px; }
.run-title { margin-top: 120.7px; }
.run-row { display: flex; align-items: center; height: 38px; margin-top: 36.3px; padding-left: 1px; font-size: 29px; line-height: 34px; }
.run-row label { padding-bottom: 2px; margin-right: 8px; }
.select.model { width: 271px; height: 34px; margin-right: 9px; }
.select.model select { padding: 0 0 0 7px; font-size: 24px; border-radius: 5px; }
.select.model .chev { width: 15px; height: 10px; margin-right: 7px; }
.run {
  width: 187px;
  height: 38px;
  padding: 0;
  border: 1.5px solid #767676;
  border-radius: 5px;
  background: #efefef;
  color: #000;
  font-family: inherit;
  font-size: 24px;
}
```
